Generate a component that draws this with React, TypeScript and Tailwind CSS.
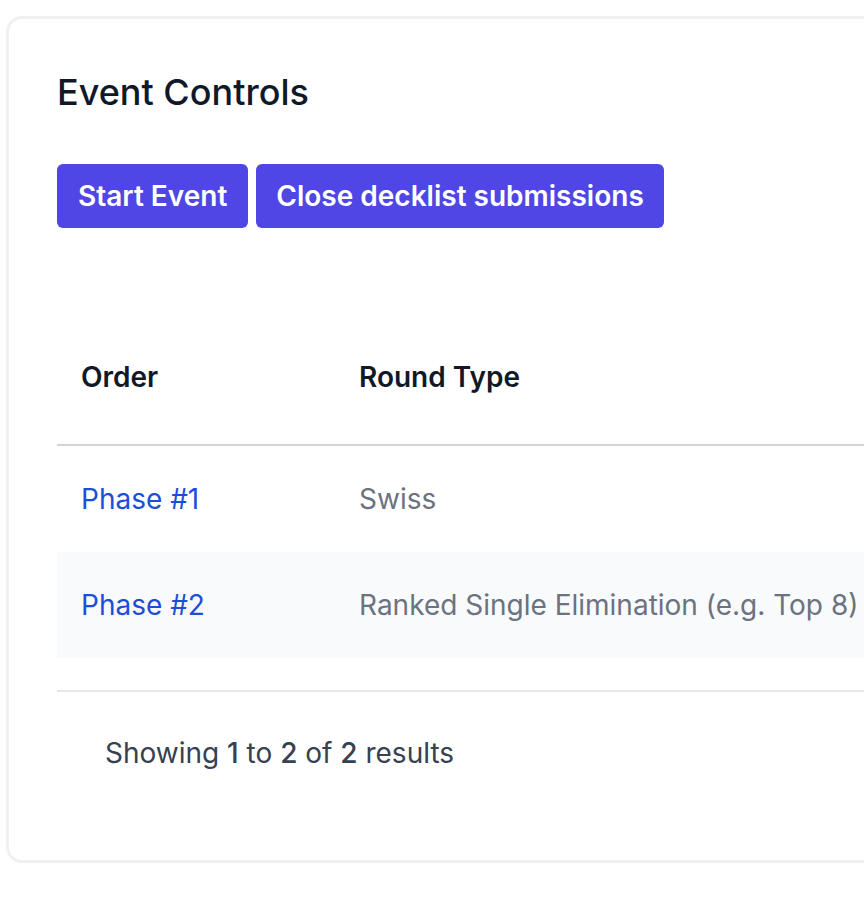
const phases = [
  { order: "Phase #1", type: "Swiss" },
  { order: "Phase #2", type: "Ranked Single Elimination (e.g. Top 8)" },
];

export default function App() {
  return (
    <div
      className="w-[864px] h-[898px] overflow-hidden bg-white"
      style={{ fontFamily: "Inter, 'Noto Sans', sans-serif" }}
    >
      <div className="ml-[6px] mt-[16px] w-[1100px] rounded-[16px] border-[3px] border-[#f0f0f1] bg-white">
        {/* Header */}
        <div className="pl-[48px] pt-[45px]">
          <h2 className="text-[36px] leading-[56px] font-medium text-[#111827]">
            Event Controls
          </h2>
          <div className="mt-[44px] flex gap-[8px]">
            <button className="h-[64px] px-[21px] rounded-[6px] bg-[#4f46e5] text-white text-[28px] font-semibold leading-[40px]">
              Start Event
            </button>
            <button className="h-[64px] px-[20px] rounded-[6px] bg-[#4f46e5] text-white text-[28px] font-semibold leading-[40px]">
              Close decklist submissions
            </button>
          </div>
        </div>

        {/* Phases table */}
        <div className="pl-[48px] mt-[101px]">
          <table className="w-full text-left text-[28px] leading-[40px]">
            <thead>
              <tr className="border-b-2 border-[#d1d5db]">
                <th className="w-[302px] pl-[24px] pt-[28px] pb-[47px] font-semibold text-[#111827]">
                  Order
                </th>
                <th className="pt-[28px] pb-[47px] font-semibold text-[#111827]">
                  Round Type
                </th>
              </tr>
            </thead>
            <tbody>
              {phases.map((p, i) => (
                <tr key={p.order} className={i % 2 === 1 ? "bg-[#f9fafb]" : "bg-white"}>
                  <td className="pl-[24px] py-[33px] text-[#1d4ed8] whitespace-nowrap">
                    {p.order}
                  </td>
                  <td className="py-[33px] text-[#6b7280] whitespace-nowrap">{p.type}</td>
                </tr>
              ))}
            </tbody>
          </table>
        </div>

        {/* Footer */}
        <div className="ml-[48px] mt-[32px] border-t-2 border-[#e5e7eb] pl-[48px] pt-[41px] pb-[87px]">
          <p className="text-[28px] leading-[40px] text-[#374151]">
            Showing <span className="font-medium">1</span> to{" "}
            <span className="font-medium">2</span> of{" "}
            <span className="font-medium">2</span> results
          </p>
        </div>
      </div>
    </div>
  );
}
